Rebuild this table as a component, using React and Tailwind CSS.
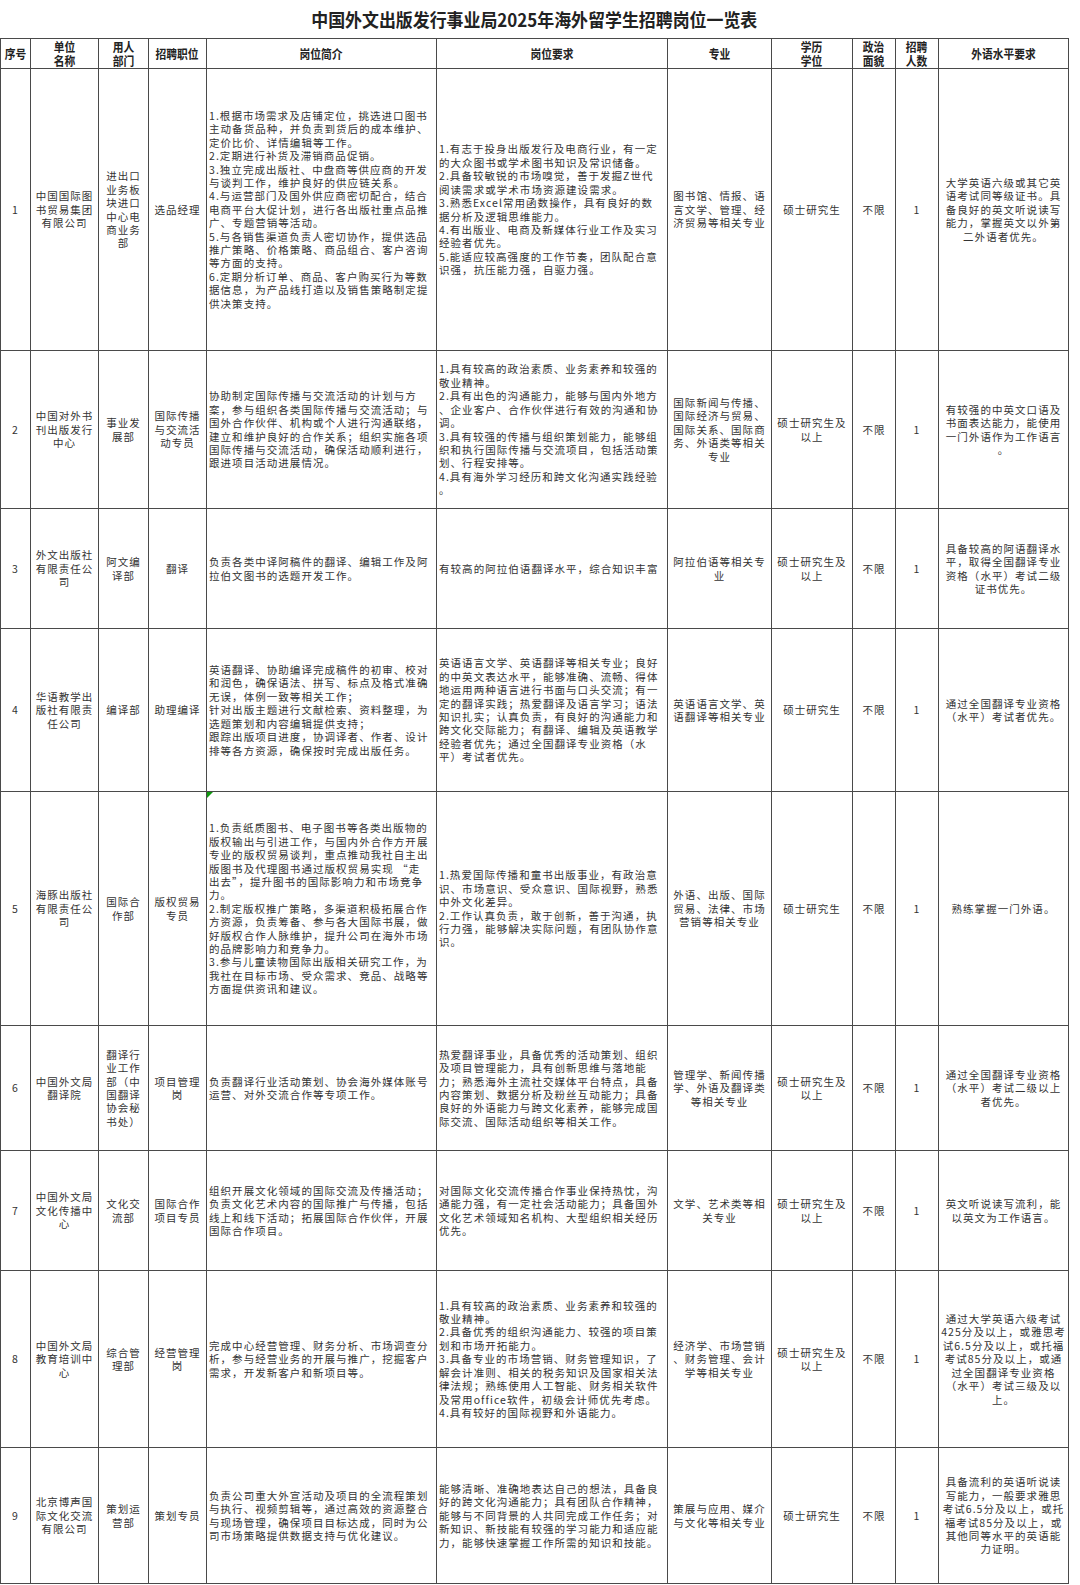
import React from 'react';

const cols = [30, 68, 50, 58, 230, 231, 104, 81, 43, 43, 130];

const headers = [
  ['序号'],
  ['单位', '名称'],
  ['用人', '部门'],
  ['招聘职位'],
  ['岗位简介'],
  ['岗位要求'],
  ['专业'],
  ['学历', '学位'],
  ['政治', '面貌'],
  ['招聘', '人数'],
  ['外语水平要求'],
];

const rows = [
  {
    h: 'h-[282px]',
    unit: ['中国国际图', '书贸易集团', '有限公司'],
    dept: ['进出口', '业务板', '块进口', '中心电', '商业务', '部'],
    post: ['选品经理'],
    intro: [
      '1.根据市场需求及店铺定位，挑选进口图书',
      '主动备货品种，并负责到货后的成本维护、',
      '定价比价、详情编辑等工作。',
      '2.定期进行补货及滞销商品促销。',
      '3.独立完成出版社、中盘商等供应商的开发',
      '与谈判工作，维护良好的供应链关系。',
      '4.与运营部门及国外供应商密切配合，结合',
      '电商平台大促计划，进行各出版社重点品推',
      '广、专题营销等活动。',
      '5.与各销售渠道负责人密切协作，提供选品',
      '推广策略、价格策略、商品组合、客户咨询',
      '等方面的支持。',
      '6.定期分析订单、商品、客户购买行为等数',
      '据信息，为产品线打造以及销售策略制定提',
      '供决策支持。',
    ],
    req: [
      '1.有志于投身出版发行及电商行业，有一定',
      '的大众图书或学术图书知识及常识储备。',
      '2.具备较敏锐的市场嗅觉，善于发掘Z世代',
      '阅读需求或学术市场资源建设需求。',
      '3.熟悉Excel常用函数操作，具有良好的数',
      '据分析及逻辑思维能力。',
      '4.有出版业、电商及新媒体行业工作及实习',
      '经验者优先。',
      '5.能适应较高强度的工作节奏，团队配合意',
      '识强，抗压能力强，自驱力强。',
    ],
    major: ['图书馆、情报、语', '言文学、管理、经', '济贸易等相关专业'],
    degree: ['硕士研究生'],
    lang: ['大学英语六级或其它英', '语考试同等级证书。具', '备良好的英文听说读写', '能力，掌握英文以外第', '二外语者优先。'],
  },
  {
    h: 'h-[158px]',
    unit: ['中国对外书', '刊出版发行', '中心'],
    dept: ['事业发', '展部'],
    post: ['国际传播', '与交流活', '动专员'],
    intro: [
      '协助制定国际传播与交流活动的计划与方',
      '案，参与组织各类国际传播与交流活动；与',
      '国外合作伙伴、机构或个人进行沟通联络，',
      '建立和维护良好的合作关系；组织实施各项',
      '国际传播与交流活动，确保活动顺利进行，',
      '跟进项目活动进展情况。',
    ],
    req: [
      '1.具有较高的政治素质、业务素养和较强的',
      '敬业精神。',
      '2.具有出色的沟通能力，能够与国内外地方',
      '、企业客户、合作伙伴进行有效的沟通和协',
      '调。',
      '3.具有较强的传播与组织策划能力，能够组',
      '织和执行国际传播与交流项目，包括活动策',
      '划、行程安排等。',
      '4.具有海外学习经历和跨文化沟通实践经验',
      '。',
    ],
    major: ['国际新闻与传播、', '国际经济与贸易、', '国际关系、国际商', '务、外语类等相关', '专业'],
    degree: ['硕士研究生及', '以上'],
    lang: ['有较强的中英文口语及', '书面表达能力，能使用', '一门外语作为工作语言', '。'],
  },
  {
    h: 'h-[120px]',
    unit: ['外文出版社', '有限责任公', '司'],
    dept: ['阿文编', '译部'],
    post: ['翻译'],
    intro: ['负责各类中译阿稿件的翻译、编辑工作及阿', '拉伯文图书的选题开发工作。'],
    req: ['有较高的阿拉伯语翻译水平，综合知识丰富'],
    major: ['阿拉伯语等相关专', '业'],
    degree: ['硕士研究生及', '以上'],
    lang: ['具备较高的阿语翻译水', '平，取得全国翻译专业', '资格（水平）考试二级', '证书优先。'],
  },
  {
    h: 'h-[163px]',
    unit: ['华语教学出', '版社有限责', '任公司'],
    dept: ['编译部'],
    post: ['助理编译'],
    intro: [
      '英语翻译、协助编译完成稿件的初审、校对',
      '和润色，确保语法、拼写、标点及格式准确',
      '无误，体例一致等相关工作；',
      '针对出版主题进行文献检索、资料整理，为',
      '选题策划和内容编辑提供支持；',
      '跟踪出版项目进度，协调译者、作者、设计',
      '排等各方资源，确保按时完成出版任务。',
    ],
    req: [
      '英语语言文学、英语翻译等相关专业；良好',
      '的中英文表达水平，能够准确、流畅、得体',
      '地运用两种语言进行书面与口头交流；有一',
      '定的翻译实践；热爱翻译及语言学习；语法',
      '知识扎实；认真负责，有良好的沟通能力和',
      '跨文化交际能力；有翻译、编辑及英语教学',
      '经验者优先；通过全国翻译专业资格（水',
      '平）考试者优先。',
    ],
    major: ['英语语言文学、英', '语翻译等相关专业'],
    degree: ['硕士研究生'],
    lang: ['通过全国翻译专业资格', '（水平）考试者优先。'],
  },
  {
    h: 'h-[234px]',
    flag: true,
    unit: ['海豚出版社', '有限责任公', '司'],
    dept: ['国际合', '作部'],
    post: ['版权贸易', '专员'],
    intro: [
      '1.负责纸质图书、电子图书等各类出版物的',
      '版权输出与引进工作，与国内外合作方开展',
      '专业的版权贸易谈判，重点推动我社自主出',
      '版图书及代理图书通过版权贸易实现 “走',
      '出去”，提升图书的国际影响力和市场竞争',
      '力。',
      '2.制定版权推广策略，多渠道积极拓展合作',
      '方资源，负责筹备、参与各大国际书展，做',
      '好版权合作人脉维护，提升公司在海外市场',
      '的品牌影响力和竞争力。',
      '3.参与儿童读物国际出版相关研究工作，为',
      '我社在目标市场、受众需求、竞品、战略等',
      '方面提供资讯和建议。',
    ],
    req: [
      '1.热爱国际传播和童书出版事业，有政治意',
      '识、市场意识、受众意识、国际视野，熟悉',
      '中外文化差异。',
      '2.工作认真负责，敢于创新，善于沟通，执',
      '行力强，能够解决实际问题，有团队协作意',
      '识。',
    ],
    major: ['外语、出版、国际', '贸易、法律、市场', '营销等相关专业'],
    degree: ['硕士研究生'],
    lang: ['熟练掌握一门外语。'],
  },
  {
    h: 'h-[125px]',
    unit: ['中国外文局', '翻译院'],
    dept: ['翻译行', '业工作', '部（中', '国翻译', '协会秘', '书处）'],
    post: ['项目管理', '岗'],
    intro: ['负责翻译行业活动策划、协会海外媒体账号', '运营、对外交流合作等专项工作。'],
    req: [
      '热爱翻译事业，具备优秀的活动策划、组织',
      '及项目管理能力，具有创新思维与落地能',
      '力；熟悉海外主流社交媒体平台特点，具备',
      '内容策划、数据分析及粉丝互动能力；具备',
      '良好的外语能力与跨文化素养，能够完成国',
      '际交流、国际活动组织等相关工作。',
    ],
    major: ['管理学、新闻传播', '学、外语及翻译类', '等相关专业'],
    degree: ['硕士研究生及', '以上'],
    lang: ['通过全国翻译专业资格', '（水平）考试二级以上', '者优先。'],
  },
  {
    h: 'h-[120px]',
    unit: ['中国外文局', '文化传播中', '心'],
    dept: ['文化交', '流部'],
    post: ['国际合作', '项目专员'],
    intro: [
      '组织开展文化领域的国际交流及传播活动；',
      '负责文化艺术内容的国际推广与传播，包括',
      '线上和线下活动；拓展国际合作伙伴，开展',
      '国际合作项目。',
    ],
    req: [
      '对国际文化交流传播合作事业保持热忱，沟',
      '通能力强，有一定社会活动能力；具备国外',
      '文化艺术领域知名机构、大型组织相关经历',
      '优先。',
    ],
    major: ['文学、艺术类等相', '关专业'],
    degree: ['硕士研究生及', '以上'],
    lang: ['英文听说读写流利，能', '以英文为工作语言。'],
  },
  {
    h: 'h-[177px]',
    unit: ['中国外文局', '教育培训中', '心'],
    dept: ['综合管', '理部'],
    post: ['经营管理', '岗'],
    intro: [
      '完成中心经营管理、财务分析、市场调查分',
      '析，参与经营业务的开展与推广，挖掘客户',
      '需求，开发新客户和新项目等。',
    ],
    req: [
      '1.具有较高的政治素质、业务素养和较强的',
      '敬业精神。',
      '2.具备优秀的组织沟通能力、较强的项目策',
      '划和市场开拓能力。',
      '3.具备专业的市场营销、财务管理知识，了',
      '解会计准则、相关的税务知识及国家相关法',
      '律法规；熟练使用人工智能、财务相关软件',
      '及常用office软件，初级会计师优先考虑。',
      '4.具有较好的国际视野和外语能力。',
    ],
    major: ['经济学、市场营销', '、财务管理、会计', '学等相关专业'],
    degree: ['硕士研究生及', '以上'],
    lang: [
      '通过大学英语六级考试',
      '425分及以上，或雅思考',
      '试6.5分及以上，或托福',
      '考试85分及以上，或通',
      '过全国翻译专业资格',
      '（水平）考试三级及以',
      '上。',
    ],
  },
  {
    h: 'h-[136px]',
    unit: ['北京博声国', '际文化交流', '有限公司'],
    dept: ['策划运', '营部'],
    post: ['策划专员'],
    intro: [
      '负责公司重大外宣活动及项目的全流程策划',
      '与执行、视频剪辑等，通过高效的资源整合',
      '与现场管理，确保项目目标达成，同时为公',
      '司市场策略提供数据支持与优化建议。',
    ],
    req: [
      '能够清晰、准确地表达自己的想法，具备良',
      '好的跨文化沟通能力；具有团队合作精神，',
      '能够与不同背景的人共同完成工作任务；对',
      '新知识、新技能有较强的学习能力和适应能',
      '力，能够快速掌握工作所需的知识和技能。',
    ],
    major: ['策展与应用、媒介', '与文化等相关专业'],
    degree: ['硕士研究生'],
    lang: [
      '具备流利的英语听说读',
      '写能力，一般要求雅思',
      '考试6.5分及以上，或托',
      '福考试85分及以上，或',
      '其他同等水平的英语能',
      '力证明。',
    ],
  },
];

const Lines = ({ lines, left }) => (
  <div className={left ? 'text-left pl-[2px]' : 'text-center'}>
    {lines.map((l, i) => (
      <div key={i} className="whitespace-nowrap">
        {l}
      </div>
    ))}
  </div>
);

const cell = 'border border-[#4a4a4a] p-0 align-middle overflow-hidden';
const headCell = 'border border-[#4a4a4a] p-0 align-middle';

export default function App() {
  return (
    <div
      className="w-[1080px] bg-white text-[#333]"
      style={{ fontFamily: '"Noto Sans CJK SC", "Noto Sans", sans-serif' }}
    >
      <div className="w-[1068px] h-[38px] flex items-center justify-center">
        <span className="inline-block whitespace-nowrap text-[18px] leading-[20px] font-bold text-[#222] scale-x-[0.94]">
          中国外文出版发行事业局2025年海外留学生招聘岗位一览表
        </span>
      </div>

      <table className="table-fixed border-collapse w-[1068px]">
        <colgroup>
          {cols.map((w, i) => (
            <col key={i} style={{ width: w }} />
          ))}
        </colgroup>
        <thead>
          <tr className="h-[30px]">
            {headers.map((h, i) => (
              <th key={i} className={headCell}>
                <div className="flex flex-col items-center text-[12.5px] leading-[13.5px] font-bold text-[#222]">
                  {h.map((t, j) => (
                    <span key={j} className="block whitespace-nowrap scale-x-[0.86]">
                      {t}
                    </span>
                  ))}
                </div>
              </th>
            ))}
          </tr>
        </thead>
        <tbody className="text-[10.5px] leading-[13.4px] tracking-[1.05px]">
          {rows.map((r, i) => (
            <tr key={i} className={r.h}>
              <td className={cell}>
                <div className="text-center">{i + 1}</div>
              </td>
              <td className={cell}>
                <Lines lines={r.unit} />
              </td>
              <td className={cell}>
                <Lines lines={r.dept} />
              </td>
              <td className={cell}>
                <Lines lines={r.post} />
              </td>
              <td className={`${cell} relative`}>
                {r.flag && (
                  <span className="absolute left-0 top-0 w-0 h-0 border-t-[6px] border-t-[#119911] border-r-[6px] border-r-transparent" />
                )}
                <Lines lines={r.intro} left />
              </td>
              <td className={cell}>
                <Lines lines={r.req} left />
              </td>
              <td className={cell}>
                <Lines lines={r.major} />
              </td>
              <td className={cell}>
                <Lines lines={r.degree} />
              </td>
              <td className={cell}>
                <div className="text-center">不限</div>
              </td>
              <td className={cell}>
                <div className="text-center">1</div>
              </td>
              <td className={cell}>
                <Lines lines={r.lang} />
              </td>
            </tr>
          ))}
        </tbody>
      </table>
    </div>
  );
}
